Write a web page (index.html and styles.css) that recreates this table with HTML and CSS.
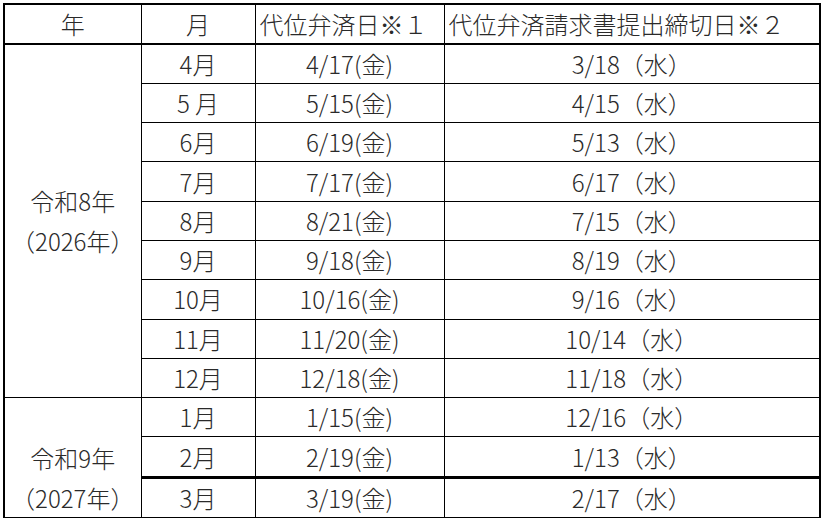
FILE: index.html
```html
<!DOCTYPE html>
<html lang="ja">
<head>
<meta charset="utf-8">
<title>代位弁済日</title>
<link rel="stylesheet" href="styles.css">
</head>
<body>
<table class="sched">
  <colgroup>
    <col class="w-year">
    <col class="w-month">
    <col class="w-date">
    <col class="w-due">
  </colgroup>
  <thead>
    <tr>
      <th>年</th>
      <th>月</th>
      <th class="left">代位弁済日※１</th>
      <th class="left">代位弁済請求書提出締切日※２</th>
    </tr>
  </thead>
  <tbody>
    <tr><td rowspan="9" class="year">令和8年<br>（2026年）</td><td>4月</td><td>4/17(金)</td><td>3/18（水）</td></tr>
    <tr><td>5 月</td><td>5/15(金)</td><td>4/15（水）</td></tr>
    <tr><td>6月</td><td>6/19(金)</td><td>5/13（水）</td></tr>
    <tr><td>7月</td><td>7/17(金)</td><td>6/17（水）</td></tr>
    <tr><td>8月</td><td>8/21(金)</td><td>7/15（水）</td></tr>
    <tr><td>9月</td><td>9/18(金)</td><td>8/19（水）</td></tr>
    <tr><td>10月</td><td>10/16(金)</td><td>9/16（水）</td></tr>
    <tr><td>11月</td><td>11/20(金)</td><td>10/14（水）</td></tr>
    <tr><td>12月</td><td>12/18(金)</td><td>11/18（水）</td></tr>
    <tr><td rowspan="3" class="year bottom">令和9年<br>（2027年）</td><td>1月</td><td>1/15(金)</td><td>12/16（水）</td></tr>
    <tr><td>2月</td><td>2/19(金)</td><td>1/13（水）</td></tr>
    <tr class="thick"><td>3月</td><td>3/19(金)</td><td>2/17（水）</td></tr>
  </tbody>
</table>
</body>
</html>
```
FILE: styles.css
```css
html, body {
  margin: 0;
  padding: 0;
  background: #ffffff;
}
body {
  padding: 3px 0 0 3px;
  font-family: "Noto Sans CJK JP", "Noto Sans", sans-serif;
  color: #2a2a2a;
}
.sched {
  border-collapse: collapse;
  table-layout: fixed;
  width: 816px;
  border: 2px solid #000;
  font-size: 24px;
  font-weight: 300;
}
.w-year { width: 137px; }
.w-month { width: 114px; }
.w-date { width: 189px; }
.w-due { width: 376px; }

.sched th,
.sched td {
  border: 1px solid #000;
  height: 38.3px;
  padding: 0;
  text-align: center;
  vertical-align: middle;
  line-height: 1;
  white-space: nowrap;
  font-weight: 300;
}
.sched thead th {
  height: 37.5px;
  border-bottom: 2px solid #000;
}
.sched th.left {
  text-align: left;
  padding-left: 4px;
}
.sched td.year {
  line-height: 39.5px;
}
.sched td.year.bottom {
  vertical-align: bottom;
  padding-bottom: 0;
}
.sched tr.thick td {
  border-top: 3px solid #000;
}
```
